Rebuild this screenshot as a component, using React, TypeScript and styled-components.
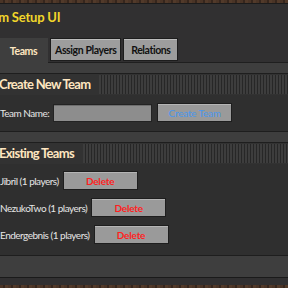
import styled, { createGlobalStyle, css } from "styled-components";

const GlobalStyle = createGlobalStyle`
  html, body {
    margin: 0;
    overflow: hidden;
    background: repeating-linear-gradient(90deg, #4a3426 0 3px, #36261d 3px 5px, #523a2a 5px 8px);
  }
  body {
    font-family: Lato, "Liberation Sans", sans-serif;
  }
`;

const Window = styled.div`
  margin: 3px 0 0 -30px;
  width: 360px;
  background: #313031;
  border-top: 1px solid #1b1b1b;
  padding-bottom: 7px;
`;

const TitleBar = styled.div`
  height: 34px;
  padding-left: 9px;
`;

const Title = styled.div`
  line-height: 26px;
  font-size: 13px;
  font-weight: 700;
  letter-spacing: -0.2px;
  color: #f2d62a;
`;

const TabStrip = styled.div`
  display: flex;
  align-items: flex-start;
  gap: 2px;
  padding-left: 29px;
  height: 24px;
`;

const Tab = styled.div<{ $active?: boolean }>`
  box-sizing: border-box;
  height: 23px;
  padding: 0 4px;
  display: flex;
  align-items: center;
  justify-content: center;
  font-size: 10.5px;
  font-weight: 700;
  letter-spacing: -0.4px;
  ${({ $active }) =>
    $active
      ? css`
          position: relative;
          z-index: 1;
          height: 25px;
          min-width: 49px;
          background: #3e3e3e;
          color: #ffe6c0;
        `
      : css`
          min-width: 55px;
          background: #9d9d9d;
          color: #111;
          border: 1px solid #1d1d1d;
          box-shadow: inset 0 1px 0 #bdbdbd;
        `}
`;

const TabPane = styled.div`
  background: #3e3e3e;
  border-top: 1px solid #1f1f1f;
  border-bottom: 1px solid #1a1a1a;
  padding: 10px 0 21px;
  display: flex;
  flex-direction: column;
  gap: 10px;
`;

const Section = styled.div`
  background: #2f2f2f;
  border-top: 1px solid #1e1e1e;
  border-bottom: 1px solid #1e1e1e;
`;

const SectionHeader = styled.div`
  display: flex;
  align-items: stretch;
  height: 21px;
  padding-left: 29px;
  background: #323232;
`;

const HeaderTitle = styled.div`
  font-size: 13px;
  font-weight: 700;
  letter-spacing: -0.7px;
  line-height: 21px;
  color: #ffe6c0;
  white-space: nowrap;
`;

const Stripes = styled.div`
  flex: 1;
  margin: 1px 0 1px 9px;
  background: repeating-linear-gradient(90deg, #3d3d3d 0 2px, #272727 2px 3px);
`;

const SectionBody = styled.div<{ $rows?: boolean }>`
  padding: 8px 0 9px 30px;
  display: flex;
  flex-direction: column;
  gap: 8px;
  ${({ $rows }) =>
    $rows &&
    css`
      padding: 7px 0 11px 30px;
    `}
`;

const Row = styled.div`
  display: flex;
  align-items: center;
  height: 19px;
  gap: 4px;
`;

const Label = styled.span`
  font-size: 10px;
  letter-spacing: -0.5px;
  color: #e6e6e6;
  white-space: nowrap;
`;

const TextInput = styled.div`
  box-sizing: border-box;
  width: 99px;
  height: 18px;
  background: #8d8d8d;
  border: 1px solid #232323;
  box-shadow: inset 0 1px 0 #6e6e6e;
`;

const Button = styled.div<{ $tone: "blue" | "red" }>`
  box-sizing: border-box;
  width: 75px;
  height: 19px;
  display: flex;
  align-items: center;
  justify-content: center;
  background: #9a9a9a;
  border: 1px solid #1e1e1e;
  box-shadow: inset 0 1px 0 #b5b5b5;
  font-size: 10px;
  letter-spacing: -0.2px;
  ${({ $tone }) =>
    $tone === "blue"
      ? css`
          margin-left: 1px;
          color: #4a97ec;
        `
      : css`
          font-weight: 700;
          color: #ff1f1f;
        `}
`;

const teams = ["Jibril", "NezukoTwo", "Endergebnis"];

export default function App() {
  return (
    <>
      <GlobalStyle />
      <Window>
        <TitleBar>
          <Title>Team Setup UI</Title>
        </TitleBar>
        <TabStrip>
          <Tab $active>Teams</Tab>
          <Tab>Assign Players</Tab>
          <Tab>Relations</Tab>
        </TabStrip>
        <TabPane>
          <Section>
            <SectionHeader>
              <HeaderTitle>Create New Team</HeaderTitle>
              <Stripes />
            </SectionHeader>
            <SectionBody>
              <Row>
                <Label>Team Name:</Label>
                <TextInput />
                <Button $tone="blue">Create Team</Button>
              </Row>
            </SectionBody>
          </Section>
          <Section>
            <SectionHeader>
              <HeaderTitle>Existing Teams</HeaderTitle>
              <Stripes />
            </SectionHeader>
            <SectionBody $rows>
              {teams.map((name) => (
                <Row key={name}>
                  <Label>{name} (1 players)</Label>
                  <Button $tone="red">Delete</Button>
                </Row>
              ))}
            </SectionBody>
          </Section>
        </TabPane>
      </Window>
    </>
  );
}
